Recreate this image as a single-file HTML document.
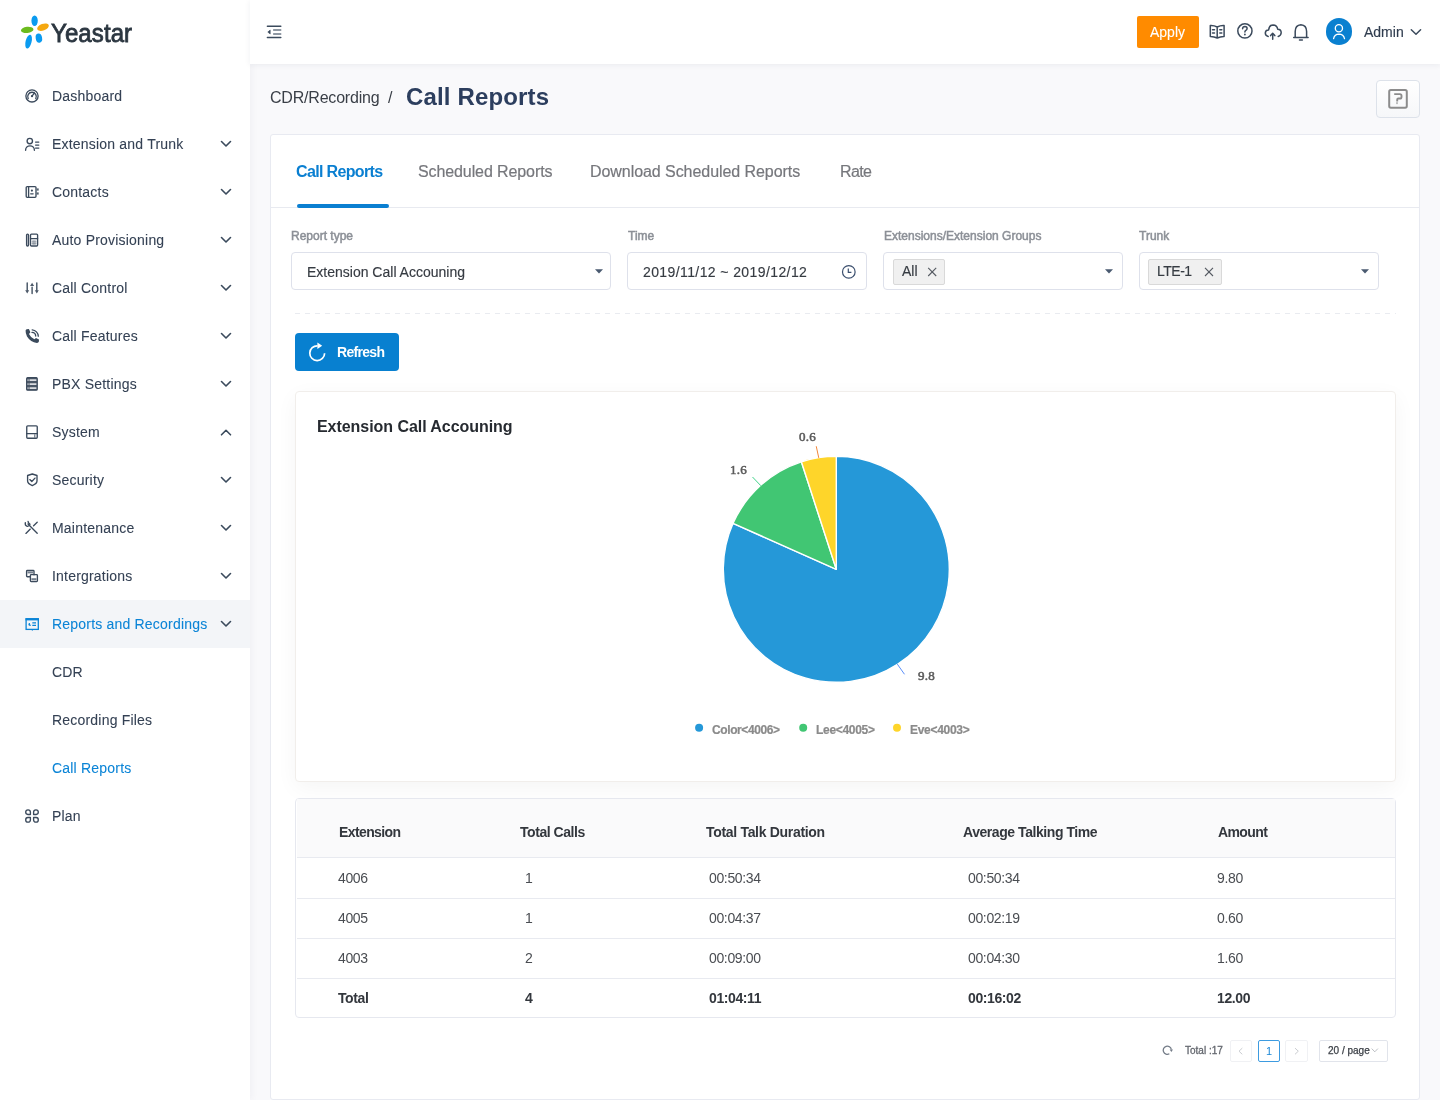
<!DOCTYPE html>
<html><head><meta charset="utf-8"><title>Call Reports</title>
<style>
html,body{margin:0;padding:0;}
body{width:1440px;height:1100px;overflow:hidden;position:relative;background:#f9f9fb;font-family:"Liberation Sans",sans-serif;}
.t{position:absolute;white-space:nowrap;will-change:transform;}
.b{position:absolute;}
</style></head><body>
<div class="b" style="left:0px;top:0px;width:250px;height:1100px;background:#fff;box-shadow:1px 0 8px rgba(30,40,70,0.05);z-index:2"></div>
<svg class="b" style="left:0;top:0;z-index:3" width="250" height="64" viewBox="0 0 250 64">
<ellipse cx="34.6" cy="20.8" rx="3.2" ry="5.2" fill="#0a9bf0"/>
<ellipse cx="27.2" cy="29.9" rx="6.3" ry="3.1" transform="rotate(-6 27.2 29.9)" fill="#6cbb1e"/>
<ellipse cx="43" cy="27.2" rx="6.1" ry="3.3" transform="rotate(-20 43 27.2)" fill="#f5a810"/>
<ellipse cx="28.6" cy="41.6" rx="3" ry="7" transform="rotate(14 28.6 41.6)" fill="#0a9bf0"/>
<ellipse cx="38.9" cy="38.1" rx="3.2" ry="4.6" transform="rotate(-10 38.9 38.1)" fill="#0a9bf0"/>
</svg>
<div class="t" style="left:51.4px;top:18.08px;font-size:24px;line-height:31px;color:#2b3640;letter-spacing:0.1px;-webkit-text-stroke:0.75px #2b3640;z-index:3;transform:scaleY(1.1);transform-origin:0 23.82px;">Yeastar</div>
<div class="b" style="left:0px;top:600px;width:250px;height:48px;background:#f3f5f8;z-index:3"></div>
<div class="t" style="left:52px;top:87.00px;font-size:14px;line-height:18px;color:#344154;letter-spacing:0.2px;-webkit-text-stroke:0.08px #344154;z-index:4;">Dashboard</div>
<div class="t" style="left:52px;top:135.00px;font-size:14px;line-height:18px;color:#344154;letter-spacing:0.2px;-webkit-text-stroke:0.08px #344154;z-index:4;">Extension and Trunk</div>
<svg class="b" style="left:0;top:0;z-index:4" width="250" height="1100"><path d="M221.5 141.5 L226 146 L230.5 141.5" fill="none" stroke="#3a4a5c" stroke-width="1.6" stroke-linecap="round" stroke-linejoin="round"/></svg>
<div class="t" style="left:52px;top:183.00px;font-size:14px;line-height:18px;color:#344154;letter-spacing:0.2px;-webkit-text-stroke:0.08px #344154;z-index:4;">Contacts</div>
<svg class="b" style="left:0;top:0;z-index:4" width="250" height="1100"><path d="M221.5 189.5 L226 194 L230.5 189.5" fill="none" stroke="#3a4a5c" stroke-width="1.6" stroke-linecap="round" stroke-linejoin="round"/></svg>
<div class="t" style="left:52px;top:231.00px;font-size:14px;line-height:18px;color:#344154;letter-spacing:0.2px;-webkit-text-stroke:0.08px #344154;z-index:4;">Auto Provisioning</div>
<svg class="b" style="left:0;top:0;z-index:4" width="250" height="1100"><path d="M221.5 237.5 L226 242 L230.5 237.5" fill="none" stroke="#3a4a5c" stroke-width="1.6" stroke-linecap="round" stroke-linejoin="round"/></svg>
<div class="t" style="left:52px;top:279.00px;font-size:14px;line-height:18px;color:#344154;letter-spacing:0.2px;-webkit-text-stroke:0.08px #344154;z-index:4;">Call Control</div>
<svg class="b" style="left:0;top:0;z-index:4" width="250" height="1100"><path d="M221.5 285.5 L226 290 L230.5 285.5" fill="none" stroke="#3a4a5c" stroke-width="1.6" stroke-linecap="round" stroke-linejoin="round"/></svg>
<div class="t" style="left:52px;top:327.00px;font-size:14px;line-height:18px;color:#344154;letter-spacing:0.2px;-webkit-text-stroke:0.08px #344154;z-index:4;">Call Features</div>
<svg class="b" style="left:0;top:0;z-index:4" width="250" height="1100"><path d="M221.5 333.5 L226 338 L230.5 333.5" fill="none" stroke="#3a4a5c" stroke-width="1.6" stroke-linecap="round" stroke-linejoin="round"/></svg>
<div class="t" style="left:52px;top:375.00px;font-size:14px;line-height:18px;color:#344154;letter-spacing:0.2px;-webkit-text-stroke:0.08px #344154;z-index:4;">PBX Settings</div>
<svg class="b" style="left:0;top:0;z-index:4" width="250" height="1100"><path d="M221.5 381.5 L226 386 L230.5 381.5" fill="none" stroke="#3a4a5c" stroke-width="1.6" stroke-linecap="round" stroke-linejoin="round"/></svg>
<div class="t" style="left:52px;top:423.00px;font-size:14px;line-height:18px;color:#344154;letter-spacing:0.2px;-webkit-text-stroke:0.08px #344154;z-index:4;">System</div>
<svg class="b" style="left:0;top:0;z-index:4" width="250" height="1100"><path d="M221.5 434.8 L226 430.3 L230.5 434.8" fill="none" stroke="#3a4a5c" stroke-width="1.6" stroke-linecap="round" stroke-linejoin="round"/></svg>
<div class="t" style="left:52px;top:471.00px;font-size:14px;line-height:18px;color:#344154;letter-spacing:0.2px;-webkit-text-stroke:0.08px #344154;z-index:4;">Security</div>
<svg class="b" style="left:0;top:0;z-index:4" width="250" height="1100"><path d="M221.5 477.5 L226 482 L230.5 477.5" fill="none" stroke="#3a4a5c" stroke-width="1.6" stroke-linecap="round" stroke-linejoin="round"/></svg>
<div class="t" style="left:52px;top:519.00px;font-size:14px;line-height:18px;color:#344154;letter-spacing:0.2px;-webkit-text-stroke:0.08px #344154;z-index:4;">Maintenance</div>
<svg class="b" style="left:0;top:0;z-index:4" width="250" height="1100"><path d="M221.5 525.5 L226 530 L230.5 525.5" fill="none" stroke="#3a4a5c" stroke-width="1.6" stroke-linecap="round" stroke-linejoin="round"/></svg>
<div class="t" style="left:52px;top:567.00px;font-size:14px;line-height:18px;color:#344154;letter-spacing:0.2px;-webkit-text-stroke:0.08px #344154;z-index:4;">Intergrations</div>
<svg class="b" style="left:0;top:0;z-index:4" width="250" height="1100"><path d="M221.5 573.5 L226 578 L230.5 573.5" fill="none" stroke="#3a4a5c" stroke-width="1.6" stroke-linecap="round" stroke-linejoin="round"/></svg>
<div class="t" style="left:52px;top:615.00px;font-size:14px;line-height:18px;color:#0b84d6;letter-spacing:0.2px;-webkit-text-stroke:0.08px #0b84d6;z-index:4;">Reports and Recordings</div>
<svg class="b" style="left:0;top:0;z-index:4" width="250" height="1100"><path d="M221.5 621.5 L226 626 L230.5 621.5" fill="none" stroke="#3a4a5c" stroke-width="1.6" stroke-linecap="round" stroke-linejoin="round"/></svg>
<svg class="b" style="left:0;top:0;z-index:4" width="250" height="1100"><circle cx="32" cy="95.95" r="6.1" fill="none" stroke="#3b4a5c" stroke-width="1.35" stroke-linecap="round" stroke-linejoin="round" stroke-width="1.4"/><path d="M28.2 98.6 A4.3 4.3 0 1 1 35.8 98.6" fill="none" stroke="#3b4a5c" stroke-width="1.35" stroke-linecap="round" stroke-linejoin="round" stroke-width="1.2"/><path d="M32 96.2 L34.3 93.2" fill="none" stroke="#3b4a5c" stroke-width="1.35" stroke-linecap="round" stroke-linejoin="round" stroke-width="1.3"/><circle cx="32" cy="96.2" r="1.1" fill="#3b4a5c"/><circle cx="29.8" cy="141" r="2.7" fill="none" stroke="#3b4a5c" stroke-width="1.35" stroke-linecap="round" stroke-linejoin="round"/><path d="M25.6 150.2 A4.4 4.4 0 0 1 34.4 150.2" fill="none" stroke="#3b4a5c" stroke-width="1.35" stroke-linecap="round" stroke-linejoin="round"/><path d="M35.6 142.1 H38.8 M35.6 145.1 H38.8 M35.6 148.1 H38.8" fill="none" stroke="#3b4a5c" stroke-width="1.35" stroke-linecap="round" stroke-linejoin="round" stroke-width="1.2" stroke-linecap="butt"/><rect x="26.2" y="186.6" width="9.8" height="10.7" rx="1" fill="none" stroke="#3b4a5c" stroke-width="1.35" stroke-linecap="round" stroke-linejoin="round"/><path d="M28.6 186.6 V197.3" fill="none" stroke="#3b4a5c" stroke-width="1.35" stroke-linecap="round" stroke-linejoin="round"/><circle cx="31.9" cy="190.6" r="1.1" fill="#3b4a5c"/><path d="M30.7 193.8 H33.1" fill="none" stroke="#3b4a5c" stroke-width="1.35" stroke-linecap="round" stroke-linejoin="round" stroke-width="1.2"/><rect x="36.6" y="188.4" width="2.1" height="2.2" fill="#56626f"/><rect x="36.6" y="192.4" width="2.1" height="2.2" fill="#56626f"/><rect x="26.6" y="234.1" width="1.9" height="11.9" rx="0.9" fill="none" stroke="#3b4a5c" stroke-width="1.35" stroke-linecap="round" stroke-linejoin="round" stroke-width="1.2"/><rect x="30.5" y="234.1" width="7.1" height="11.9" rx="1" fill="none" stroke="#3b4a5c" stroke-width="1.35" stroke-linecap="round" stroke-linejoin="round" stroke-width="1.2"/><path d="M30.5 238.6 H37.6" fill="none" stroke="#3b4a5c" stroke-width="1.35" stroke-linecap="round" stroke-linejoin="round" stroke-width="1.2"/><rect x="31.6" y="240.2" width="4.9" height="4.8" fill="#dfe2e6"/><path d="M31.6 241.8 H36.5 M31.6 243.4 H36.5 M33.2 240.2 V245 M34.9 240.2 V245" fill="none" stroke="#6d7784" stroke-width="0.55"/><path d="M27.2 282.8 V290.4 M32.1 287.2 V293.5 M36.8 282.8 V290.4" fill="none" stroke="#3b4a5c" stroke-width="1.35" stroke-linecap="round" stroke-linejoin="round" stroke-width="1.3" stroke-linecap="butt" stroke="#4d5a6a"/><path d="M25.2 290.3 H29.2 L27.2 293.5 Z M34.8 290.3 H38.8 L36.8 293.5 Z M30.1 286 H34.1 L32.1 282.7 Z" fill="#4d5a6a"/><path d="M26.7 329.2 L28.9 329 L30.4 332.3 L29 333.9 Q30.8 337.6 34.4 339.3 L36 337.9 L39 339.6 L38.9 341.6 Q38.5 342.8 37 342.9 Q30.5 342.3 27 336.6 Q25.4 333.5 25.6 330.6 Q25.8 329.4 26.7 329.2 Z" fill="#3b4a5c"/><path d="M32.2 329.9 A6.6 6.6 0 0 1 38.3 336.2" fill="none" stroke="#3b4a5c" stroke-width="1.35" stroke-linecap="round" stroke-linejoin="round" stroke-width="1.3"/><path d="M32 332.4 A3.8 3.8 0 0 1 35.7 336.1" fill="none" stroke="#3b4a5c" stroke-width="1.35" stroke-linecap="round" stroke-linejoin="round" stroke-width="1.3"/><rect x="26.6" y="377.6" width="10.7" height="12.7" rx="1.1" fill="#4a5666" stroke="#3b4a5c" stroke-width="1.1"/><rect x="29.5" y="379.35" width="6.9" height="1.5" fill="#f2f3f5"/><rect x="27.5" y="379.35" width="1.1" height="1.5" fill="#e6e8eb"/><rect x="29.5" y="383.35" width="6.9" height="1.5" fill="#f2f3f5"/><rect x="27.5" y="383.35" width="1.1" height="1.5" fill="#e6e8eb"/><rect x="29.5" y="387.35" width="6.9" height="1.5" fill="#f2f3f5"/><rect x="27.5" y="387.35" width="1.1" height="1.5" fill="#e6e8eb"/><rect x="26.75" y="425.85" width="10.5" height="12.4" rx="1" fill="none" stroke="#3b4a5c" stroke-width="1.35" stroke-linecap="round" stroke-linejoin="round" stroke-width="1.3"/><path d="M26.75 433.6 H37.25" fill="none" stroke="#3b4a5c" stroke-width="1.35" stroke-linecap="round" stroke-linejoin="round" stroke-width="1.3"/><path d="M34.8 434.3 V437.6" fill="none" stroke="#3b4a5c" stroke-width="0.9"/><path d="M32.3 474 L37 475.5 V481 Q37 483.7 32.3 485.6 Q27.6 483.7 27.6 481 V475.5 Z" fill="none" stroke="#3b4a5c" stroke-width="1.35" stroke-linecap="round" stroke-linejoin="round" stroke-width="1.3"/><path d="M29.8 479.6 L31.8 481.5 L35 478.1" fill="none" stroke="#3b4a5c" stroke-width="1.35" stroke-linecap="round" stroke-linejoin="round" stroke-width="1.3"/><path d="M28 524 L37.2 533.2" fill="none" stroke="#3b4a5c" stroke-width="1.35" stroke-linecap="round" stroke-linejoin="round" stroke-width="2.1"/><path d="M25.3 522.6 Q24.8 525.6 27.2 526.3 Q29.6 526.5 30 524.2 L28.6 522.9 L28.1 521.5" fill="none" stroke="#3b4a5c" stroke-width="1.35" stroke-linecap="round" stroke-linejoin="round" stroke-width="1.5"/><path d="M25.9 533.4 L30.3 529.1 M33.6 525.7 L37.2 522.3" fill="none" stroke="#3b4a5c" stroke-width="1.35" stroke-linecap="round" stroke-linejoin="round" stroke-width="2.1"/><path d="M29.6 576.7 H27.4 Q26.6 576.7 26.6 575.9 V571.2 Q26.6 570.5 27.4 570.5 H33.2 Q34 570.5 34 571.2 V574.7" fill="none" stroke="#3b4a5c" stroke-width="1.35" stroke-linecap="round" stroke-linejoin="round" stroke-width="1.2"/><rect x="30.4" y="574.6" width="7" height="7" rx="0.8" fill="none" stroke="#3b4a5c" stroke-width="1.35" stroke-linecap="round" stroke-linejoin="round" stroke-width="1.2"/><rect x="27.6" y="571.6" width="5.4" height="1.8" fill="#3b4a5c" opacity="0.7"/><rect x="31.4" y="578.2" width="5" height="2.2" fill="#3b4a5c" opacity="0.7"/><rect x="26.1" y="618.8" width="12.2" height="10.6" fill="none" stroke="#0b84d6" stroke-width="1.3"/><rect x="25.5" y="618.2" width="13.4" height="2.2" fill="#0b84d6"/><path d="M30 622.9 A1.5 1.5 0 1 0 31.3 624.8 L30 624.8 Z" fill="#0b84d6"/><path d="M32.3 622.9 H36 M32.3 625.3 H36" fill="none" stroke="#0b84d6" stroke-width="1.2"/><path d="M31.3 629.6 H33.2 L32.25 631 Z" fill="#0b84d6"/><path d="M30.4 814.5 H27.9 A2.35 2.35 0 1 1 30.4 812 Z" fill="none" stroke="#3b4a5c" stroke-width="1.35" stroke-linecap="round" stroke-linejoin="round" stroke-width="1.35"/><path d="M33.6 814.5 H36.1 A2.35 2.35 0 1 0 33.6 812 Z" fill="none" stroke="#3b4a5c" stroke-width="1.35" stroke-linecap="round" stroke-linejoin="round" stroke-width="1.35"/><path d="M30.4 817.5 H27.9 A2.35 2.35 0 1 0 30.4 820 Z" fill="none" stroke="#3b4a5c" stroke-width="1.35" stroke-linecap="round" stroke-linejoin="round" stroke-width="1.35"/><path d="M33.6 817.5 H36.1 A2.35 2.35 0 1 1 33.6 820 Z" fill="none" stroke="#3b4a5c" stroke-width="1.35" stroke-linecap="round" stroke-linejoin="round" stroke-width="1.35"/></svg>
<div class="t" style="left:52px;top:663.00px;font-size:14px;line-height:18px;color:#344154;letter-spacing:0.2px;-webkit-text-stroke:0.08px #344154;z-index:4;">CDR</div>
<div class="t" style="left:52px;top:711.00px;font-size:14px;line-height:18px;color:#344154;letter-spacing:0.2px;-webkit-text-stroke:0.08px #344154;z-index:4;">Recording Files</div>
<div class="t" style="left:52px;top:759.00px;font-size:14px;line-height:18px;color:#0b84d6;letter-spacing:0.2px;-webkit-text-stroke:0.08px #0b84d6;z-index:4;">Call Reports</div>
<div class="t" style="left:52px;top:807.00px;font-size:14px;line-height:18px;color:#344154;letter-spacing:0.2px;-webkit-text-stroke:0.08px #344154;z-index:4;">Plan</div>
<div class="b" style="left:250px;top:0px;width:1190px;height:64px;background:#fff;box-shadow:0 1px 6px rgba(30,40,70,0.07);z-index:5"></div>
<svg class="b" style="left:0;top:0;z-index:7" width="1440" height="64"><path d="M267.4 26.3 H280.8 M267.4 37.6 H280.8" fill="none" stroke="#3b4a5c" stroke-width="1.5" stroke-linecap="round" stroke-linejoin="round" stroke-width="1.3"/><path d="M273.6 30 H280.8 M273.6 34 H280.8" fill="none" stroke="#6b7785" stroke-width="1.3" stroke-linecap="round"/><path d="M270.2 30.1 V34 L267.8 32.05 Z" fill="#3b4a5c" stroke="#3b4a5c" stroke-width="0.6" stroke-linejoin="round"/><path d="M1210.3 25.6 Q1214 25.4 1217.2 27 Q1220.4 25.4 1224.1 25.6 V36.4 Q1220.4 36.3 1217.2 38 Q1214 36.3 1210.3 36.4 Z M1217.2 27 V38" fill="none" stroke="#3b4a5c" stroke-width="1.5" stroke-linecap="round" stroke-linejoin="round" stroke-width="1.6"/><path d="M1212.5 29.7 H1214.5 M1212.5 33 H1214.5 M1219.8 29.7 H1221.8 M1219.8 33 H1221.8" fill="none" stroke="#3b4a5c" stroke-width="1.5" stroke-linecap="round" stroke-linejoin="round" stroke-width="1.5"/><circle cx="1244.9" cy="30.9" r="7.1" fill="none" stroke="#3b4a5c" stroke-width="1.5" stroke-linecap="round" stroke-linejoin="round"/><path d="M1242.6 28.8 Q1242.7 26.6 1244.9 26.6 Q1247.1 26.7 1247.1 28.6 Q1247.1 29.9 1245.6 30.6 Q1244.9 31 1244.9 32.1" fill="none" stroke="#3b4a5c" stroke-width="1.5" stroke-linecap="round" stroke-linejoin="round" stroke-width="1.5"/><circle cx="1244.9" cy="34.5" r="0.9" fill="#3b4a5c"/><path d="M1268.2 36.4 Q1265.2 35.8 1265.3 32.8 Q1265.6 30 1268.6 30 Q1269.2 25 1273.1 24.9 Q1277 25 1277.7 29.2 Q1281.2 29.3 1281.2 32.7 Q1281 35.7 1278.2 36.4" fill="none" stroke="#3b4a5c" stroke-width="1.5" stroke-linecap="round" stroke-linejoin="round" stroke-width="1.5"/><path d="M1272.7 39.2 V33.5 M1270.6 35.6 L1272.7 33.3 L1274.8 35.6" fill="none" stroke="#3b4a5c" stroke-width="1.5" stroke-linecap="round" stroke-linejoin="round" stroke-width="1.5"/><path d="M1293.7 37.5 H1308.1 M1295.2 37.5 V31.5 Q1295.2 25.1 1300.9 24.7 Q1306.6 25.1 1306.6 31.5 V37.5" fill="none" stroke="#3b4a5c" stroke-width="1.5" stroke-linecap="round" stroke-linejoin="round" stroke-width="1.5"/><path d="M1299.5 40 H1302.4" fill="none" stroke="#3b4a5c" stroke-width="1.5" stroke-linecap="round" stroke-linejoin="round" stroke-width="1.5"/><circle cx="1338.9" cy="28.3" r="3.6" fill="none" stroke="#fff" stroke-width="1.3"/><path d="M1333.6 38.7 Q1334.5 34.3 1339 34.2 Q1343.5 34.3 1344.5 38.7" fill="none" stroke="#fff" stroke-width="1.3" stroke-linecap="round"/><path d="M1411.3 29.8 L1416 34.3 L1420.6 29.8" fill="none" stroke="#3b4a5c" stroke-width="1.5" stroke-linecap="round" stroke-linejoin="round" stroke-width="1.6"/></svg>
<div class="b" style="left:1137px;top:16px;width:62px;height:32px;background:#ff8b00;border-radius:2px;z-index:6"></div>
<div class="t" style="left:1150px;top:22.95px;font-size:14px;line-height:18px;color:#fff;-webkit-text-stroke:0.1px #fff;z-index:7;">Apply</div>
<div class="t" style="left:1363.5px;top:22.95px;font-size:14px;line-height:18px;color:#303d4f;-webkit-text-stroke:0.15px #303d4f;z-index:7;">Admin</div>
<div class="b" style="left:1325.7px;top:18.3px;width:26.7px;height:26.7px;background:#0a80d0;border-radius:50%;z-index:6"></div>
<div class="t" style="left:270px;top:87.25px;font-size:16px;line-height:21px;color:#3a3f47;letter-spacing:-0.2px;">CDR/Recording&nbsp;&nbsp;/</div>
<div class="t" style="left:406px;top:81.28px;font-size:24px;line-height:31px;color:#2c3e5e;font-weight:700;letter-spacing:0.15px;">Call Reports</div>
<div class="b" style="left:1376px;top:80px;width:44px;height:38px;border:1px solid #dde2ea;border-radius:4px;box-sizing:border-box;background:linear-gradient(#fff,#f6f7f9)"></div>
<div class="b" style="left:270px;top:134px;width:1150px;height:966px;background:#fff;border:1px solid #e8eaf1;border-radius:3px;box-sizing:border-box"></div>
<div class="b" style="left:271px;top:207px;width:1148px;height:1px;background:#e8eaf0"></div>
<div class="b" style="left:296.5px;top:204px;width:92px;height:4px;background:#0a7fd1;border-radius:2px"></div>
<div class="t" style="left:295.5px;top:161.05px;font-size:16px;line-height:21px;color:#0a7fd1;font-weight:700;letter-spacing:-0.65px;">Call Reports</div>
<div class="t" style="left:418px;top:161.05px;font-size:16px;line-height:21px;color:#76777c;letter-spacing:-0.1px;-webkit-text-stroke:0.2px #76777c;">Scheduled Reports</div>
<div class="t" style="left:589.5px;top:161.05px;font-size:16px;line-height:21px;color:#76777c;letter-spacing:-0.06px;-webkit-text-stroke:0.2px #76777c;">Download Scheduled Reports</div>
<div class="t" style="left:840px;top:161.05px;font-size:16px;line-height:21px;color:#76777c;letter-spacing:-0.6px;-webkit-text-stroke:0.2px #76777c;">Rate</div>
<div class="t" style="left:291.3px;top:227.84px;font-size:12px;line-height:16px;color:#8c9097;-webkit-text-stroke:0.5px #8c9097;">Report type</div>
<div class="t" style="left:627.5px;top:227.84px;font-size:12px;line-height:16px;color:#8c9097;-webkit-text-stroke:0.5px #8c9097;">Time</div>
<div class="t" style="left:883.7px;top:227.84px;font-size:12px;line-height:16px;color:#8c9097;-webkit-text-stroke:0.5px #8c9097;">Extensions/Extension Groups</div>
<div class="t" style="left:1139.3px;top:227.84px;font-size:12px;line-height:16px;color:#8c9097;-webkit-text-stroke:0.5px #8c9097;">Trunk</div>
<div class="b" style="left:291px;top:252px;width:320px;height:38px;border:1px solid #dee1eb;border-radius:4px;box-sizing:border-box;background:#fff"></div>
<div class="b" style="left:627px;top:252px;width:240px;height:38px;border:1px solid #dee1eb;border-radius:4px;box-sizing:border-box;background:#fff"></div>
<div class="b" style="left:883px;top:252px;width:240px;height:38px;border:1px solid #dee1eb;border-radius:4px;box-sizing:border-box;background:#fff"></div>
<div class="b" style="left:1139px;top:252px;width:240px;height:38px;border:1px solid #dee1eb;border-radius:4px;box-sizing:border-box;background:#fff"></div>
<div class="t" style="left:307px;top:262.85px;font-size:14px;line-height:18px;color:#363b42;-webkit-text-stroke:0.15px #363b42;">Extension Call Accouning</div>
<div class="t" style="left:643px;top:262.85px;font-size:14px;line-height:18px;color:#363b42;letter-spacing:0.4px;-webkit-text-stroke:0.15px #363b42;">2019/11/12 ~ 2019/12/12</div>
<div class="b" style="left:892.5px;top:259px;width:52px;height:25.5px;background:#f0f0f0;border:1px solid #d9d9d9;border-radius:2px;box-sizing:border-box"></div>
<div class="t" style="left:901.5px;top:262.15px;font-size:14px;line-height:18px;color:#363b42;-webkit-text-stroke:0.15px #363b42;">All</div>
<div class="b" style="left:1148px;top:259px;width:74px;height:25.5px;background:#f0f0f0;border:1px solid #d9d9d9;border-radius:2px;box-sizing:border-box"></div>
<div class="t" style="left:1157px;top:262.15px;font-size:14px;line-height:18px;color:#363b42;letter-spacing:-0.5px;-webkit-text-stroke:0.15px #363b42;">LTE-1</div>
<svg class="b" style="left:0;top:0" width="1440" height="1100"><line x1="295" y1="313.5" x2="1396" y2="313.5" stroke="#e9ebf0" stroke-width="1" stroke-dasharray="5 5"/></svg>
<div class="b" style="left:295px;top:333px;width:104px;height:38px;background:#0880d0;border-radius:4px"></div>
<div class="t" style="left:336.5px;top:342.95px;font-size:14px;line-height:18px;color:#fff;font-weight:700;letter-spacing:-0.7px;">Refresh</div>
<div class="b" style="left:294.5px;top:390.5px;width:1101.5px;height:391.5px;background:#fff;border:1px solid #f1eeeb;border-radius:4px;box-sizing:border-box;box-shadow:0 6px 22px rgba(0,0,0,0.045)"></div>
<div class="t" style="left:316.7px;top:415.65px;font-size:16px;line-height:21px;color:#262a30;font-weight:700;letter-spacing:-0.05px;">Extension Call Accouning</div>
<div class="b" style="left:295px;top:798px;width:1100.5px;height:220px;background:#fff;border:1px solid #e6e8ef;border-radius:4px;box-sizing:border-box;overflow:hidden"></div>
<div class="b" style="left:296.5px;top:799px;width:1098px;height:58px;background:#fafafb"></div>
<div class="b" style="left:296.5px;top:857px;width:1098px;height:1px;background:#e8eaf0"></div>
<div class="b" style="left:296.5px;top:898px;width:1098px;height:1px;background:#e8eaf0"></div>
<div class="b" style="left:296.5px;top:938px;width:1098px;height:1px;background:#e8eaf0"></div>
<div class="b" style="left:296.5px;top:978px;width:1098px;height:1px;background:#e8eaf0"></div>
<div class="t" style="left:339.1px;top:823.35px;font-size:14px;line-height:18px;color:#33373d;font-weight:700;letter-spacing:-0.6px;">Extension</div>
<div class="t" style="left:520.3px;top:823.35px;font-size:14px;line-height:18px;color:#33373d;font-weight:700;letter-spacing:-0.45px;">Total Calls</div>
<div class="t" style="left:706.1px;top:823.35px;font-size:14px;line-height:18px;color:#33373d;font-weight:700;letter-spacing:-0.31px;">Total Talk Duration</div>
<div class="t" style="left:963.0px;top:823.35px;font-size:14px;line-height:18px;color:#33373d;font-weight:700;letter-spacing:-0.44px;">Average Talking Time</div>
<div class="t" style="left:1218.0px;top:823.35px;font-size:14px;line-height:18px;color:#33373d;font-weight:700;letter-spacing:-0.6px;">Amount</div>
<div class="t" style="left:337.5px;top:868.85px;font-size:14px;line-height:18px;color:#4a4d52;letter-spacing:-0.35px;">4006</div>
<div class="t" style="left:525.0px;top:868.85px;font-size:14px;line-height:18px;color:#4a4d52;letter-spacing:-0.35px;">1</div>
<div class="t" style="left:708.5px;top:868.85px;font-size:14px;line-height:18px;color:#4a4d52;letter-spacing:-0.35px;">00:50:34</div>
<div class="t" style="left:967.5px;top:868.85px;font-size:14px;line-height:18px;color:#4a4d52;letter-spacing:-0.35px;">00:50:34</div>
<div class="t" style="left:1216.5px;top:868.85px;font-size:14px;line-height:18px;color:#4a4d52;letter-spacing:-0.35px;">9.80</div>
<div class="t" style="left:337.5px;top:908.85px;font-size:14px;line-height:18px;color:#4a4d52;letter-spacing:-0.35px;">4005</div>
<div class="t" style="left:525.0px;top:908.85px;font-size:14px;line-height:18px;color:#4a4d52;letter-spacing:-0.35px;">1</div>
<div class="t" style="left:708.5px;top:908.85px;font-size:14px;line-height:18px;color:#4a4d52;letter-spacing:-0.35px;">00:04:37</div>
<div class="t" style="left:967.5px;top:908.85px;font-size:14px;line-height:18px;color:#4a4d52;letter-spacing:-0.35px;">00:02:19</div>
<div class="t" style="left:1216.5px;top:908.85px;font-size:14px;line-height:18px;color:#4a4d52;letter-spacing:-0.35px;">0.60</div>
<div class="t" style="left:337.5px;top:948.85px;font-size:14px;line-height:18px;color:#4a4d52;letter-spacing:-0.35px;">4003</div>
<div class="t" style="left:525.0px;top:948.85px;font-size:14px;line-height:18px;color:#4a4d52;letter-spacing:-0.35px;">2</div>
<div class="t" style="left:708.5px;top:948.85px;font-size:14px;line-height:18px;color:#4a4d52;letter-spacing:-0.35px;">00:09:00</div>
<div class="t" style="left:967.5px;top:948.85px;font-size:14px;line-height:18px;color:#4a4d52;letter-spacing:-0.35px;">00:04:30</div>
<div class="t" style="left:1216.5px;top:948.85px;font-size:14px;line-height:18px;color:#4a4d52;letter-spacing:-0.35px;">1.60</div>
<div class="t" style="left:337.5px;top:988.65px;font-size:14px;line-height:18px;color:#33373d;font-weight:700;letter-spacing:-0.4px;">Total</div>
<div class="t" style="left:525.0px;top:988.65px;font-size:14px;line-height:18px;color:#33373d;font-weight:700;letter-spacing:-0.4px;">4</div>
<div class="t" style="left:708.5px;top:988.65px;font-size:14px;line-height:18px;color:#33373d;font-weight:700;letter-spacing:-0.4px;">01:04:11</div>
<div class="t" style="left:967.5px;top:988.65px;font-size:14px;line-height:18px;color:#33373d;font-weight:700;letter-spacing:-0.4px;">00:16:02</div>
<div class="t" style="left:1216.5px;top:988.65px;font-size:14px;line-height:18px;color:#33373d;font-weight:700;letter-spacing:-0.4px;">12.00</div>
<div class="t" style="left:799px;top:427.69px;font-size:13px;line-height:17px;color:#5c5c5c;letter-spacing:0.2px;-webkit-text-stroke:0.55px #5c5c5c;font-family:'Liberation Serif',serif;z-index:6;">0.6</div>
<div class="t" style="left:730.2px;top:460.74px;font-size:13px;line-height:17px;color:#5c5c5c;letter-spacing:0.2px;-webkit-text-stroke:0.55px #5c5c5c;font-family:'Liberation Serif',serif;z-index:6;">1.6</div>
<div class="t" style="left:918.2px;top:667.49px;font-size:13px;line-height:17px;color:#5c5c5c;letter-spacing:0.2px;-webkit-text-stroke:0.55px #5c5c5c;font-family:'Liberation Serif',serif;z-index:6;">9.8</div>
<div class="t" style="left:712px;top:721.94px;font-size:12px;line-height:16px;color:#8a8a8a;font-weight:700;letter-spacing:-0.4px;-webkit-text-stroke:0.2px #8a8a8a;z-index:6;">Color&lt;4006&gt;</div>
<div class="t" style="left:815.7px;top:721.94px;font-size:12px;line-height:16px;color:#8a8a8a;font-weight:700;letter-spacing:-0.3px;-webkit-text-stroke:0.2px #8a8a8a;z-index:6;">Lee&lt;4005&gt;</div>
<div class="t" style="left:909.7px;top:721.94px;font-size:12px;line-height:16px;color:#8a8a8a;font-weight:700;letter-spacing:-0.3px;-webkit-text-stroke:0.2px #8a8a8a;z-index:6;">Eve&lt;4003&gt;</div>
<svg class="b" style="left:0;top:0;z-index:5" width="1440" height="1100"><rect x="1389.2" y="90.1" width="17.6" height="17.6" rx="1.6" fill="none" stroke="#8c8c8c" stroke-width="2"/><path d="M1394.2 94.1 H1399.9 Q1401.5 94.1 1401.5 95.7 V96.9 Q1401.5 98.5 1399.9 98.5 H1398.4 Q1397.2 98.5 1397.2 99.7 V101.4" fill="none" stroke="#8c8c8c" stroke-width="1.9"/><path d="M1395.9 102.6 H1398.1 L1397 104.4 Z" fill="#8c8c8c"/><path d="M595 269.2 H603 L599 273.4 Z" fill="#4a5a70"/><path d="M1105 269.2 H1113 L1109 273.4 Z" fill="#4a5a70"/><path d="M1361 269.2 H1369 L1365 273.4 Z" fill="#4a5a70"/><circle cx="848.8" cy="271.9" r="6.3" fill="none" stroke="#3b4f6e" stroke-width="1.2"/><path d="M848.3 268.6 V272.4 H851.4" fill="none" stroke="#3b4f6e" stroke-width="1.2"/><path d="M928.2 267.9 L936.2 276 M936.2 267.9 L928.2 276" fill="none" stroke="#555a62" stroke-width="1.1"/><path d="M1205 267.9 L1213 276 M1213 267.9 L1205 276" fill="none" stroke="#555a62" stroke-width="1.1"/><path d="M317.6 345.8 A7.4 7.4 0 1 0 324.6 353.2" fill="none" stroke="#fff" stroke-width="1.7" stroke-linecap="butt"/><path d="M317.4 342.5 L322.2 345.7 L317.4 348.9 Z" fill="#fff"/><path d="M836.3 569.3 L836.30 456.30 A113 113 0 1 1 733.07 523.34 Z" fill="#2598d8" stroke="#fff" stroke-width="1.4" stroke-linejoin="round"/><path d="M836.3 569.3 L733.07 523.34 A113 113 0 0 1 801.38 461.83 Z" fill="#41c673" stroke="#fff" stroke-width="1.4" stroke-linejoin="round"/><path d="M836.3 569.3 L801.38 461.83 A113 113 0 0 1 836.30 456.30 Z" fill="#fed52a" stroke="#fff" stroke-width="1.4" stroke-linejoin="round"/><path d="M897.3 664.1 L904.5 674.3" stroke="#5b8ff9" stroke-width="1" fill="none"/><path d="M752.5 477 L760.8 485.7" stroke="#41d38a" stroke-width="1" fill="none"/><path d="M816.25 446.25 L818.75 457.9" stroke="#f2873a" stroke-width="1" fill="none"/><circle cx="699.1" cy="727.7" r="4" fill="#2598d8"/><circle cx="803.2" cy="727.7" r="4" fill="#41c673"/><circle cx="897" cy="727.7" r="4" fill="#fed52a"/><path d="M1169.35 1053.75 A4.1 4.1 0 1 1 1171.34 1049.49" fill="none" stroke="#747c88" stroke-width="1.3"/><path d="M1169.7 1049.4 L1173 1049.4 L1171.35 1051.9 Z" fill="#747c88"/><path d="M1242.3 1048.1 L1239 1051.2 L1242.3 1054.3" fill="none" stroke="#c4c7cc" stroke-width="0.9"/><path d="M1295 1048.1 L1298.3 1051.2 L1295 1054.3" fill="none" stroke="#c4c7cc" stroke-width="0.9"/><path d="M1371.7 1048.6 L1374.8 1051.8 L1377.9 1048.6" fill="none" stroke="#a9adb4" stroke-width="0.8"/></svg>
<div class="t" style="left:1184.5px;top:1043.83px;font-size:10px;line-height:13px;color:#63676e;-webkit-text-stroke:0.3px #63676e;">Total :17</div>
<div class="b" style="left:1229.5px;top:1040px;width:22.5px;height:22px;border:1px solid #f0f1f4;border-radius:2px;box-sizing:border-box"></div>
<div class="b" style="left:1257.5px;top:1040px;width:22.5px;height:22px;border:1px solid #3d9be0;border-radius:2px;box-sizing:border-box"></div>
<div class="b" style="left:1285px;top:1040px;width:22.5px;height:22px;border:1px solid #f0f1f4;border-radius:2px;box-sizing:border-box"></div>
<div class="t" style="left:1265.7px;top:1043.69px;font-size:11px;line-height:14px;color:#1a86d6;">1</div>
<div class="b" style="left:1319px;top:1039.5px;width:68.5px;height:22.5px;border:1px solid #e1e4eb;border-radius:2px;box-sizing:border-box"></div>
<div class="t" style="left:1327.5px;top:1044.33px;font-size:10px;line-height:13px;color:#3c4047;-webkit-text-stroke:0.25px #3c4047;">20 / page</div>
</body></html>
